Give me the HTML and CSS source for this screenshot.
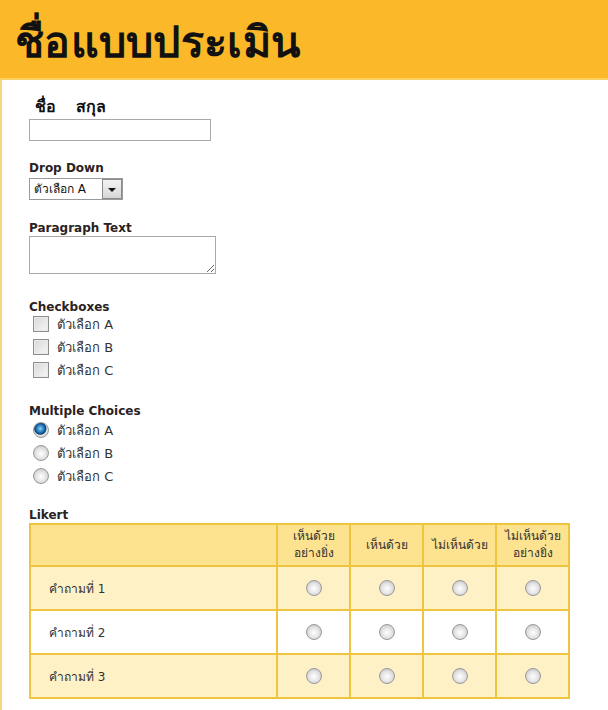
FILE: index.html
```html
<!DOCTYPE html>
<html lang="th">
<head>
<meta charset="utf-8">
<title>ชื่อแบบประเมิน</title>
<link rel="stylesheet" href="styles.css">
</head>
<body>
<header class="banner">
  <h1 class="banner-title">ชื่อแบบประเมิน</h1>
</header>
<main class="form">
  <section class="field field-name">
    <label class="label label-thai" for="fullname">ชื่อ&nbsp;&nbsp; สกุล</label>
    <input class="text-input" id="fullname" type="text">
  </section>

  <section class="field">
    <label class="label" for="dd">Drop Down</label>
    <div class="select-box">
      <select class="select" id="dd">
        <option>ตัวเลือก A</option>
        <option>ตัวเลือก B</option>
        <option>ตัวเลือก C</option>
      </select>
      <span class="select-btn"><span class="select-arrow"></span></span>
    </div>
  </section>

  <section class="field field-para">
    <label class="label" for="para">Paragraph Text</label>
    <textarea class="textarea" id="para"></textarea>
  </section>

  <section class="field field-checks">
    <div class="label">Checkboxes</div>
    <div class="options">
      <label class="option"><input class="check" type="checkbox"><span>ตัวเลือก A</span></label>
      <label class="option"><input class="check" type="checkbox"><span>ตัวเลือก B</span></label>
      <label class="option"><input class="check" type="checkbox"><span>ตัวเลือก C</span></label>
    </div>
  </section>

  <section class="field field-radios">
    <div class="label">Multiple Choices</div>
    <div class="options">
      <label class="option"><input class="radio" type="radio" name="mc" checked><span>ตัวเลือก A</span></label>
      <label class="option"><input class="radio" type="radio" name="mc"><span>ตัวเลือก B</span></label>
      <label class="option"><input class="radio" type="radio" name="mc"><span>ตัวเลือก C</span></label>
    </div>
  </section>

  <section class="field field-likert">
    <div class="label">Likert</div>
    <table class="likert">
      <thead>
        <tr>
          <th class="q-col"></th>
          <th>เห็นด้วย<br>อย่างยิ่ง</th>
          <th>เห็นด้วย</th>
          <th>ไม่เห็นด้วย</th>
          <th>ไม่เห็นด้วย<br>อย่างยิ่ง</th>
        </tr>
      </thead>
      <tbody>
        <tr class="row-alt">
          <td class="q">คำถามที่ 1</td>
          <td><input class="radio" type="radio" name="q1"></td>
          <td><input class="radio" type="radio" name="q1"></td>
          <td><input class="radio" type="radio" name="q1"></td>
          <td><input class="radio" type="radio" name="q1"></td>
        </tr>
        <tr>
          <td class="q">คำถามที่ 2</td>
          <td><input class="radio" type="radio" name="q2"></td>
          <td><input class="radio" type="radio" name="q2"></td>
          <td><input class="radio" type="radio" name="q2"></td>
          <td><input class="radio" type="radio" name="q2"></td>
        </tr>
        <tr class="row-alt">
          <td class="q">คำถามที่ 3</td>
          <td><input class="radio" type="radio" name="q3"></td>
          <td><input class="radio" type="radio" name="q3"></td>
          <td><input class="radio" type="radio" name="q3"></td>
          <td><input class="radio" type="radio" name="q3"></td>
        </tr>
      </tbody>
    </table>
  </section>
</main>
</body>
</html>
```
FILE: styles.css
```css
html, body {
  margin: 0;
  padding: 0;
  background: #ffffff;
}
body {
  font-family: "DejaVu Sans", Tahoma, "Noto Sans", sans-serif;
  color: #222;
  width: 608px;
  height: 710px;
  overflow: hidden;
}
.banner {
  background: #fbb829;
  height: 78px;
  border-bottom: 2px solid #fcd061;
  display: flex;
  align-items: center;
  padding-left: 15px;
}
.banner-title {
  margin: 0;
  font-size: 43px;
  font-weight: bold;
  color: #111;
  line-height: 1;
  padding-top: 6px;
  letter-spacing: 0.3px;
}
.form {
  border-left: 2px solid #f6d77c;
  padding: 21px 0 0 27px;
  display: flex;
  flex-direction: column;
  gap: 20px;
  min-height: 640px;
}
.field {
  display: flex;
  flex-direction: column;
  align-items: flex-start;
}
.label {
  font-weight: bold;
  font-size: 12px;
  color: #2a2222;
  line-height: 15px;
}
.label-thai {
  font-size: 16px;
  line-height: 15px;
  padding-left: 6px;
  word-spacing: 1px;
  color: #111;
  margin-top: -2px;
  margin-bottom: 5px;
}
.text-input {
  width: 182px;
  height: 22px;
  box-sizing: border-box;
  border: 1px solid #a9a9a9;
  margin: 0;
  padding: 0 3px;
}
.select-box {
  display: flex;
  align-items: stretch;
  border: 1px solid #9a9a9a;
  height: 22px;
  box-sizing: border-box;
  margin-top: 2px;
  background: #fff;
}
.select {
  appearance: none;
  -webkit-appearance: none;
  border: none;
  background: #fff;
  font: 12px "DejaVu Sans", Tahoma, sans-serif;
  color: #111;
  padding: 0 4px 0 4px;
  width: 72px;
  outline: none;
}
.select-btn {
  width: 18px;
  border: 1px solid #8b8b8b;
  background: linear-gradient(#f4f4f4, #d6d6d6);
  display: flex;
  align-items: center;
  justify-content: center;
}
.select-arrow {
  width: 0;
  height: 0;
  border-left: 4px solid transparent;
  border-right: 4px solid transparent;
  border-top: 4px solid #111;
  margin-top: 2px;
}
.field-para {
  margin-top: 1px;
}
.textarea {
  width: 187px;
  height: 38px;
  box-sizing: border-box;
  border: 1px solid #a9a9a9;
  margin: 0;
  resize: both;
}
.field-checks {
  margin-top: 6px;
}
.field-radios {
  margin-top: 5px;
}
.options {
  display: flex;
  flex-direction: column;
  gap: 5px;
  margin-top: 0;
  padding-left: 4px;
}
.field-radios .options {
  margin-top: 2px;
}
.option {
  display: flex;
  align-items: center;
  gap: 8px;
  font-size: 13px;
  color: #333;
  height: 18px;
}
.check {
  appearance: none;
  -webkit-appearance: none;
  margin: 0;
  width: 16px;
  height: 16px;
  box-sizing: border-box;
  border: 1px solid #8e8e8e;
  background: linear-gradient(135deg, #d8d8d8, #f6f6f6);
  box-shadow: inset 0 0 0 1px #eaeaea;
}
.radio {
  appearance: none;
  -webkit-appearance: none;
  margin: 0;
  width: 16px;
  height: 16px;
  box-sizing: border-box;
  border-radius: 50%;
  border: 1px solid #9a9a9a;
  background: radial-gradient(circle at 50% 55%, #ffffff 0, #e6e6e6 45%, #b9b9b9 100%);
}
.radio:checked {
  background: radial-gradient(circle at 45% 40%, #8fd0f5 0, #1e73b8 35%, #0d3f70 50%, #e8e8e8 58%, #b0b0b0 100%);
}
.field-likert {
  margin-top: 3px;
}
.field-likert .label {
  margin-bottom: 0;
}
.likert {
  border-collapse: collapse;
  width: 541px;
  border: 2px solid #efc43e;
  font-size: 12px;
}
.likert th, .likert td {
  border: 2px solid #efc43e;
  text-align: center;
  vertical-align: middle;
  padding: 0;
}
.likert th {
  background: #fde28f;
  font-weight: normal;
  color: #333;
  height: 40px;
  line-height: 17px;
  width: 71px;
}
.likert th.q-col {
  width: auto;
}
.likert td {
  height: 42px;
  background: #fff;
}
.likert tr.row-alt td {
  background: #fff1c6;
}
.likert td.q {
  text-align: left;
  padding-left: 18px;
  color: #333;
}
.likert .radio {
  display: block;
  margin: 0 auto;
}
```
